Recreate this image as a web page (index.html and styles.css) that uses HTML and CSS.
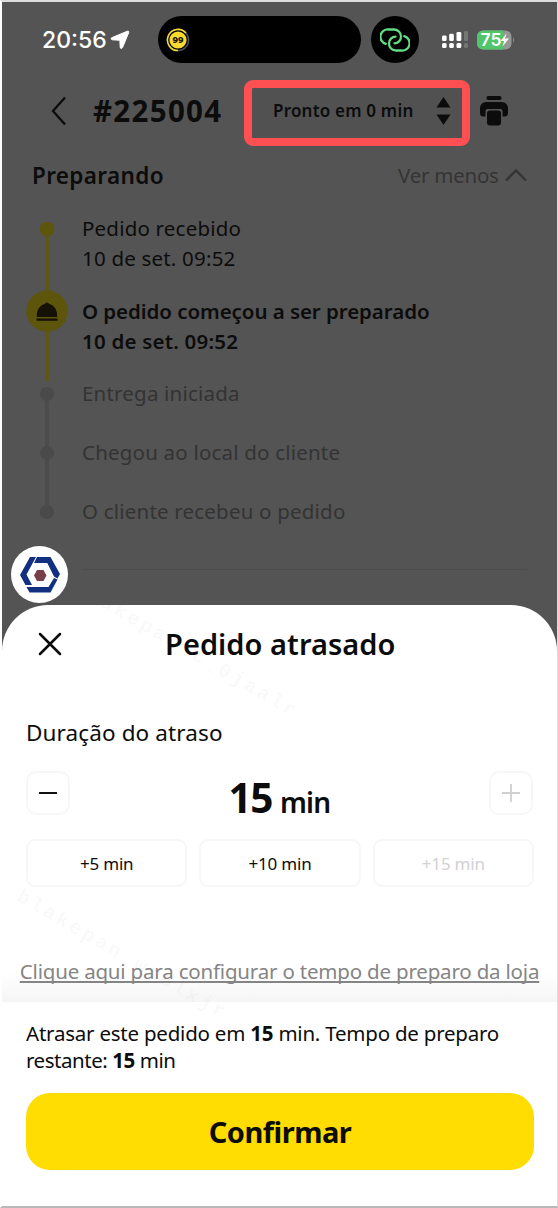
FILE: index.html
```html
<!DOCTYPE html>
<html lang="pt-BR">
<head>
<meta charset="utf-8">
<title>Pedido atrasado</title>
<link rel="stylesheet" href="styles.css">
</head>
<body>
<main class="screen">
  <div class="status">
    <span class="clock">20:56</span>
    <svg class="location" width="20" height="19" viewBox="0 0 20 19"><path d="M17.400 1.200 2 7.600c-1.400.7-1.200 2 .4 2.200l6.600.4c.7 0 .9.3.9 1l.3 6c.2 1.600 1.600 1.800 2.300.4l6.200-15c.4-1.100-.3-1.800-1.300-1.400Z" fill="#fff" stroke="#fff"/></svg>
    <div class="island">
      <svg width="24" height="24" viewBox="0 0 24 24"><circle cx="12" cy="12" r="10.600" fill="none" stroke="#555" stroke-width="1.400"/><path d="M20 5A10.600 10.600 0 1 0 12 22.600" fill="none" stroke="#f4d83b" stroke-width="1.500"/><circle cx="12" cy="12" r="8.600" fill="#f8d92f"/><text class="brand" x="12" y="15.400" text-anchor="middle">99</text></svg>
    </div>
    <div class="hotspot">
      <svg width="30" height="24" viewBox="0 0 30 24" fill="none" stroke="#62dc84" stroke-width="2.300" stroke-linecap="round"><path d="M5.800 15.800A7.300 7.300 0 0 1 8.500 1.500H14a7 7 0 0 1 7 7c0 4-3 6.800-6.500 6.800"/><path d="M24.200 8.200A7.300 7.300 0 0 1 21.500 22.500H16a7 7 0 0 1-7-7c0-4 3-6.800 6.500-6.800"/></svg>
    </div>
    <svg class="signal" width="28" height="18" viewBox="0 0 28 18"><g fill="#fff"><rect x="0" y="4.500" width="4.600" height="5.500" rx="1.300"/><rect x="7.200" y="2.800" width="4.600" height="7.200" rx="1.300"/><rect x="14.500" y="1" width="4.800" height="9" rx="1.300"/><rect x="0" y="12" width="4.600" height="5" rx="1.500"/><rect x="7.200" y="12" width="4.600" height="5" rx="1.500"/><rect x="14.500" y="12" width="4.800" height="5" rx="1.500"/></g><g fill="#767676"><rect x="22" y="0" width="4" height="10" rx="1.300"/><rect x="22" y="12" width="4" height="5" rx="1.500"/></g></svg>
    <svg class="battery" width="38" height="20" viewBox="0 0 38 20"><rect y=".5" width="34.500" height="19" rx="6" fill="#969696"/><path d="M6 .5h20v19H6a6 6 0 0 1-6-6v-7a6 6 0 0 1 6-6Z" fill="#50c56c"/><path d="M36 7q2.500 3 0 6Z" fill="#858585"/><text class="charge" x="3.500" y="16">75</text><path d="m29.500 3.500-6 7.500h3.600l-1.600 5.500 6.500-8h-4Z" fill="#fff"/></svg>
  </div>

  <header class="order">
    <svg class="back" width="18" height="30" viewBox="0 0 18 30"><path d="M16 1.500 4 15l12 13.500" fill="none" stroke="#0c0c0c" stroke-width="2.300"/></svg>
    <h1 class="number">#225004</h1>
    <div class="ready">
      <span class="ready-text">Pronto em 0 min</span>
      <svg width="15" height="28" viewBox="0 0 15 28"><path d="M7.500 0 14.500 10.500H.5ZM.5 17.500h14L7.500 28Z" fill="#0c0c0c"/></svg>
    </div>
    <svg class="printer" width="28" height="30" viewBox="0 0 28 30" fill="#0c0c0c"><rect x="6.500" y="0" width="15" height="4" rx="1.800"/><path d="M6 6h16a6 6 0 0 1 6 6v5a3.500 3.500 0 0 1-3.500 3.500h-2V15a2 2 0 0 0-2-2h-13a2 2 0 0 0-2 2v5.500h-2A3.500 3.500 0 0 1 0 17v-5a6 6 0 0 1 6-6Z"/><rect x="7" y="14.500" width="14" height="15" rx="3"/></svg>
  </header>

  <div class="stage">
    <h2 class="stage-name">Preparando</h2>
    <span class="less">Ver menos</span>
    <svg class="fold" width="22" height="14" viewBox="0 0 22 14"><path d="m1 12.500 10-10 10 10" fill="none" stroke="#343434" stroke-width="2.300"/></svg>
  </div>

  <div class="timeline">
    <svg class="rail" width="42" height="310" viewBox="0 0 42 310"><path d="M21 180v125" stroke="#4c4c4c" stroke-width="4"/><g fill="#4a4a4a"><circle cx="21" cy="180" r="7"/><circle cx="21" cy="239" r="7"/><circle cx="21" cy="298" r="7"/></g><path d="M21 16v151" stroke="#5f580d" stroke-width="3.500"/><g fill="#5d550b"><circle cx="21" cy="15" r="7.300"/><circle cx="21" cy="97" r="20.700"/></g><path d="M10.800 103c-.3-7.300 3-11.800 8-12.900a2.300 2.300 0 0 1 4.400 0c5 1.100 8.300 5.600 8 12.900ZM10.500 104.500h21v2.300h-21Z" fill="#151104"/></svg>
    <ol class="steps">
      <li class="step tall"><span>Pedido recebido</span><span>10 de set. 09:52</span></li>
      <li class="step tall current"><span class="now">O pedido começou a ser preparado</span><span>10 de set. 09:52</span></li>
      <li class="step later"><span>Entrega iniciada</span></li>
      <li class="step later"><span>Chegou ao local do cliente</span></li>
      <li class="step later"><span>O cliente recebeu o pedido</span></li>
    </ol>
  </div>
  <div class="rule"></div>

  <section class="sheet">
    <div class="sheet-head">
      <svg class="close" width="24" height="24" viewBox="0 0 24 24"><path d="m2 2 20 20m0-20-20 20" stroke="#0b0b0b" stroke-width="2.500" stroke-linecap="round"/></svg>
      <h2 class="title">Pedido atrasado</h2>
    </div>
    <div class="label"><span>Duração do atraso</span></div>
    <div class="stepper">
      <button class="step-btn"><svg width="22" height="22" viewBox="0 0 22 22"><path d="M2 11h18" stroke="#111" stroke-width="2"/></svg></button>
      <div class="amount"><span class="value">15</span><span class="unit">min</span></div>
      <button class="step-btn"><svg width="22" height="22" viewBox="0 0 22 22"><path d="M2 11h18M11 2v18" stroke="#d0d0d0" stroke-width="1.800"/></svg></button>
    </div>
    <div class="chips">
      <button class="chip">+5 min</button>
      <button class="chip">+10 min</button>
      <button class="chip off">+15 min</button>
    </div>
    <div class="config"><a class="config-link">Clique aqui para configurar o tempo de preparo da loja</a></div>
    <footer class="footer">
      <p class="summary"><span class="delay">Atrasar este pedido em <b>15</b> min. Tempo de preparo</span><br><span class="left">restante: <b>15</b> min</span></p>
      <button class="confirm">Confirmar</button>
    </footer>
  </section>

  <div class="badge"><svg width="42" height="38" viewBox="0 0 42 38"><path d="M11 1h6L7.500 18.500 13 29H6.500L1 19ZM18 1h13.500L41 18l-2.500 4.500-3.500-2L28.300 7H15ZM35 22l3.500 1.500-7 13H10.500L7.500 31h22Z" fill="#11307f"/><path d="m18 14h6.500l3 5.500-3 5.500H18l-3-5.500Z" fill="#783f48"/></svg></div>
  <span class="mark mark-a">blakepan-c_0jaalr</span>
  <span class="mark mark-b">blakepan_wr8lxjr</span>
</main>
</body>
</html>
```
FILE: styles.css
```css
* { box-sizing: border-box; }
body { margin: 0; background: #fff; }
button { margin: 0; padding: 0; background: none; font: inherit; color: inherit; letter-spacing: inherit; }
h1, h2, p, ol { margin: 0; padding: 0; }
span, h1, h2, a, button { white-space: nowrap; }
svg { display: block; flex: none; }

.screen {
  position: relative;
  width: 558px;
  height: 1208px;
  overflow: hidden;
  border: solid #dcdddd;
  border-width: 2px 1px 2px 2px;
  border-left-color: #fff;
  border-bottom-color: #b8b8b8;
  background: #545454;
  color: #0c0c0c;
  font-family: "Noto Sans", "Open Sans", sans-serif;
  font-size: 20.500px;
}

.status { display: flex; align-items: center; height: 75px; padding-left: 40px; }
.clock { width: 68px; color: #fff; font: 500 23px/28px Inter, sans-serif; }
.island { display: flex; align-items: center; width: 203px; height: 47px; margin-left: 28px; padding-left: 8px; border-radius: 24px; background: #000; }
.brand { fill: #171400; font: 800 9.500px "Noto Sans", sans-serif; }
.hotspot { display: grid; place-items: center; width: 48px; height: 47px; margin-left: 10px; border-radius: 50%; background: #000; }
.signal { margin-left: 23px; }
.battery { margin-left: 7px; }
.charge { fill: #fff; font: 600 17.500px Inter, sans-serif; }

.order { display: flex; align-items: center; height: 72px; padding-left: 47px; }
.back, .number { margin-bottom: 4px; }
.number { width: 151px; margin-left: 26px; font-size: 29.500px; line-height: 36px; font-weight: 700; letter-spacing: 1.300px; }
.ready { display: flex; align-items: center; justify-content: space-between; width: 226px; height: 66px; padding: 0 11px 5px 21px; border: 8px solid #fe5052; border-radius: 9px; background: #515152; }
.ready-text { font-size: 17px; font-weight: 600; letter-spacing: .2px; }
.printer { margin: 0 0 4px 10px; }

.stage { display: flex; align-items: center; height: 48px; padding-left: 30px; margin-top: 2px; }
.stage-name { flex: 1; font-size: 22.500px; font-weight: 650; letter-spacing: .350px; }
.less { width: 107px; color: #343434; letter-spacing: -.250px; }
.fold { margin-right: 30px; }

.timeline { display: flex; margin-top: 15px; padding-left: 24px; }
.rail { margin-right: 14px; }
.steps { margin-top: -1px; list-style: none; letter-spacing: .2px; }
.step { display: flex; flex-direction: column; align-items: flex-start; height: 59px; line-height: 30px; }
.tall { height: 82.500px; }
.current { font-weight: 600; }
.now { letter-spacing: -.060px; }
.later { color: #333; }
.rule { height: 1px; margin: 14px 30px 0 80px; background: #4d4d4d; }

.sheet { height: 601px; margin-top: 35px; border-radius: 46px 46px 0 0; background: #fff; overflow: hidden; }
.sheet-head { display: flex; align-items: center; height: 78px; padding-left: 36px; }
.title { margin: 0 0 2px 103px; font-size: 29px; font-weight: 650; letter-spacing: .050px; }
.label { display: flex; align-items: center; height: 88px; padding: 10px 0 0 24px; font-size: 22.500px; letter-spacing: .120px; }
.stepper { display: flex; align-items: flex-start; justify-content: space-between; height: 68px; padding: 0 24px; }
.step-btn { display: grid; place-items: center; width: 44px; height: 44px; border: 2px solid #f7f7f7; border-radius: 10px; }
.amount { display: flex; align-items: baseline; gap: 8px; padding-top: 2px; line-height: 50px; font-weight: 700; }
.value { font-size: 40.500px; letter-spacing: -1.500px; }
.unit { font-size: 28px; font-weight: 650; letter-spacing: -.700px; }
.chips { display: grid; grid-template-columns: repeat(3, 1fr); gap: 12px; height: 48px; padding: 0 23px 0 24px; }
.chip { border: 2px solid #f7f7f7; border-radius: 9px; font-size: 17px; letter-spacing: -.200px; }
.off { color: #d2d2d2; }
.config { display: flex; justify-content: center; height: 115px; padding: 69px 0 0; line-height: 30px; color: #858585; background: linear-gradient(#fff 86px, #f5f5f5); }
.config-link { height: 30px; letter-spacing: -.190px; text-decoration: underline; text-decoration-thickness: 1.500px; text-underline-offset: 2px; text-decoration-skip-ink: none; }
.footer { height: 204px; padding: 18px 23px 0 24px; background: #fff; }
.summary { height: 73px; line-height: 27px; }
.delay { letter-spacing: -.220px; }
.left { letter-spacing: -.450px; }
.confirm { display: block; width: 508px; height: 77px; border: 0; border-radius: 24px; background: #ffdd03; font-size: 29px; font-weight: 700; letter-spacing: -.500px; }

.badge { position: absolute; left: 9px; top: 544px; display: grid; place-items: center; width: 57px; height: 57px; border-radius: 50%; background: #fff; }
.mark { position: absolute; color: rgba(90, 90, 70, .045); font: 700 20px "Liberation Mono", monospace; letter-spacing: 3px; transform-origin: left top; transform: rotate(30deg); pointer-events: none; }
.mark-a { left: 80px; top: 574px; }
.mark-b { left: 22px; top: 883px; }
```
